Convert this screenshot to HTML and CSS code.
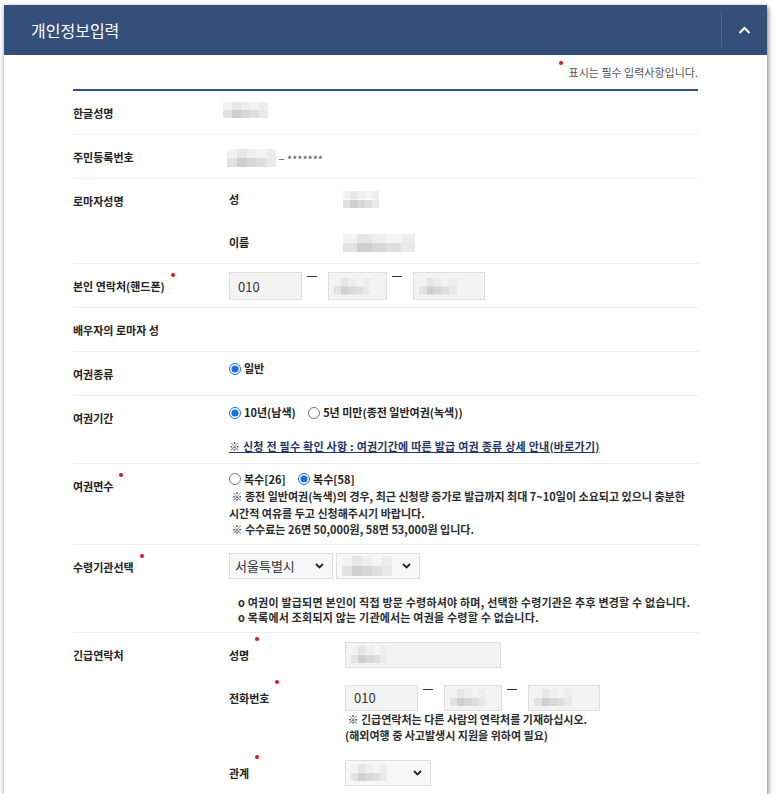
FILE: index.html
```html
<!DOCTYPE html>
<html>

<head>
    <meta charset="utf-8">
    <link rel="stylesheet" href="styles.css">
</head>

<body>
    <section class="panel">
        <div class="panel-head">
            <h2 class="panel-title">개인정보입력</h2>
            <button class="panel-toggle" type="button">
                <svg width="13" height="8" viewBox="0 0 13 8"><polyline points="1.5,7 6.5,2 11.5,7" fill="none" stroke="#fff" stroke-width="2" /></svg>
            </button>
        </div>

        <div class="panel-body">
            <p class="req-note"><span class="mark"></span>표시는 필수 입력사항입니다.</p>

            <div class="form">
                <div class="row">
                    <div class="row-label">한글성명</div>
                    <div class="value-name"><span class="blur blur-name"></span></div>
                </div>

                <div class="row">
                    <div class="row-label">주민등록번호</div>
                    <div class="value-text"><span class="blur blur-id"></span> − *******</div>
                </div>

                <div class="row">
                    <div class="row-label">로마자성명</div>
                    <div class="sub-grid roman">
                        <div class="sub-label">성</div>
                        <div class="sub-value"><span class="blur blur-sur"></span></div>
                        <div class="sub-label">이름</div>
                        <div class="sub-value"><span class="blur blur-given"></span></div>
                    </div>
                </div>

                <div class="row">
                    <div class="row-label"><span class="req">본인 연락처(핸드폰)</span></div>
                    <div class="value-field">
                        <div class="phone">
                            <div class="field w-73">010</div>
                            <span class="dash"></span>
                            <div class="field w-59"><span class="blur blur-in"></span></div>
                            <span class="dash"></span>
                            <div class="field w-72"><span class="blur blur-in2"></span></div>
                        </div>
                    </div>
                </div>

                <div class="row">
                    <div class="row-label">배우자의 로마자 성</div>
                    <div></div>
                </div>

                <div class="row">
                    <div class="row-label">여권종류</div>
                    <div class="value-choice">
                        <label class="radio"><input type="radio" name="kind" checked>일반</label>
                    </div>
                </div>

                <div class="row">
                    <div class="row-label">여권기간</div>
                    <div class="value-choice">
                        <label class="radio"><input type="radio" name="period" checked>10년(남색)</label>
                        <label class="radio"><input type="radio" name="period">5년 미만(종전 일반여권(녹색))</label>
                        <a class="guide-link" href="#">※ 신청 전 필수 확인 사항 : 여권기간에 따른 발급 여권 종류 상세 안내(바로가기)</a>
                    </div>
                </div>

                <div class="row">
                    <div class="row-label"><span class="req">여권면수</span></div>
                    <div class="value-choice pages">
                        <label class="radio"><input type="radio" name="pages">복수[26]</label>
                        <label class="radio"><input type="radio" name="pages" checked>복수[58]</label>
                        <p class="note">&nbsp;※ 종전 일반여권(녹색)의 경우, 최근 신청량 증가로 발급까지 최대 7~10일이 소요되고 있으니 충분한<br>시간적 여유를 두고 신청해주시기 바랍니다.<br>&nbsp;※ 수수료는 26면 50,000원, 58면 53,000원 입니다.</p>
                    </div>
                </div>

                <div class="row">
                    <div class="row-label"><span class="req">수령기관선택</span></div>
                    <div class="value-field">
                        <div class="selects">
                            <div class="select w-104">서울특별시<svg class="caret" width="9" height="6" viewBox="0 0 9 6"><polyline points="1,1 4.5,4.5 8,1" fill="none" stroke="#222" stroke-width="1.8" /></svg></div>
                            <div class="select w-84"><span class="blur blur-sel"></span><svg class="caret" width="9" height="6" viewBox="0 0 9 6"><polyline points="1,1 4.5,4.5 8,1" fill="none" stroke="#222" stroke-width="1.8" /></svg></div>
                        </div>
                        <p class="note office">o 여권이 발급되면 본인이 직접 방문 수령하셔야 하며, 선택한 수령기관은 추후 변경할 수 없습니다.<br>o 목록에서 조회되지 않는 기관에서는 여권을 수령할 수 없습니다.</p>
                    </div>
                </div>

                <div class="row">
                    <div class="row-label">긴급연락처</div>
                    <div class="sub-grid emergency">
                        <div class="sub-label"><span class="req">성명</span></div>
                        <div class="field w-156"><span class="blur blur-in"></span></div>

                        <div class="sub-label"><span class="req">전화번호</span></div>
                        <div>
                            <div class="phone">
                                <div class="field w-73">010</div>
                                <span class="dash"></span>
                                <div class="field w-58"><span class="blur blur-in"></span></div>
                                <span class="dash"></span>
                                <div class="field w-72"><span class="blur blur-in2"></span></div>
                            </div>
                            <p class="note contact">&nbsp;※ 긴급연락처는 다른 사람의 연락처를 기재하십시오.<br>(해외여행 중 사고발생시 지원을 위하여 필요)</p>
                        </div>

                        <div class="sub-label"><span class="req">관계</span></div>
                        <div class="select w-86"><span class="blur blur-in"></span><svg class="caret" width="9" height="6" viewBox="0 0 9 6"><polyline points="1,1 4.5,4.5 8,1" fill="none" stroke="#222" stroke-width="1.8" /></svg></div>
                    </div>
                </div>
            </div>
        </div>
    </section>
</body>

</html>
```

FILE: styles.css
```css
* {
    box-sizing: border-box;
}

body {
    margin: 0;
    background: #fff;
    font-family: "Noto Sans CJK KR", "Noto Sans", sans-serif;
    color: #222;
}

.panel {
    width: 763px;
    margin: 5px 0 0 4px;
    background: #fff;
    box-shadow: 1px 2px 5px rgba(0, 0, 0, .55);
}

.panel-head {
    display: flex;
    align-items: center;
    height: 50px;
    background: #354f7b;
}

.panel-title {
    flex: 1;
    margin: 0;
    padding-left: 27px;
    font-size: 16px;
    font-weight: normal;
    line-height: 50px;
    color: #fff;
}

.panel-toggle {
    display: flex;
    align-items: center;
    justify-content: center;
    width: 46px;
    height: 33px;
    padding: 0;
    border: 0;
    border-left: 1px solid #4b6490;
    background: none;
}

.panel-body {
    padding: 9px 69px 8px;
}

.req-note {
    margin: 0 0 9px;
    text-align: right;
    font-size: 11px;
    line-height: 16px;
    color: #555;
}

.mark {
    display: inline-block;
    width: 4px;
    height: 4px;
    margin-right: 6px;
    border-radius: 50%;
    background: #e6141c;
    vertical-align: top;
    position: relative;
    top: -3px;
}

.form {
    border-top: 2px solid #354f7b;
}

.row {
    display: grid;
    grid-template-columns: 156px 1fr;
    border-bottom: 1px solid #ececec;
    font-size: 11px;
    line-height: 17px;
}

.row:last-child {
    border-bottom: 0;
}

.row-label {
    padding: 14px 0 12px;
    font-weight: bold;
}

.req::after {
    content: "";
    display: inline-block;
    width: 4px;
    height: 4px;
    margin-left: 6px;
    border-radius: 50%;
    background: #e6141c;
    vertical-align: top;
    position: relative;
    top: -5px;
}

/* redacted values */
.blur {
    display: inline-block;
    height: 17px;
    background:
        linear-gradient(90deg, #f2f2f2 0 20%, #e6e6e6 20% 40%, #eeeeee 40% 60%, #f4f4f4 60% 80%, #ededed 80%) top / 100% 50% no-repeat,
        linear-gradient(90deg, #e2e2e2 0 20%, #cfcfcf 20% 40%, #d7d7d7 40% 60%, #dedede 60% 80%, #e9e9e9 80%) bottom / 100% 50% no-repeat;
}

.blur-name {
    width: 45px;
    height: 16px;
    margin-left: -6px;
}

.blur-id {
    width: 49px;
    height: 18px;
    margin-left: -2px;
    vertical-align: -3px;
}

.blur-sur {
    width: 36px;
}

.blur-given {
    width: 72px;
    height: 18px;
}

.blur-in {
    width: 36px;
}

.blur-in2 {
    width: 38px;
}

.blur-sel {
    width: 50px;
    height: 20px;
}

.value-name {
    padding-top: 11px;
}

.value-text {
    padding-top: 14px;
    color: #555;
}

.sub-grid {
    display: grid;
    align-items: start;
}

.roman {
    grid-template-columns: 114px 1fr;
    grid-auto-rows: 17px;
    row-gap: 26px;
    padding: 12px 0;
}

.sub-value {
    display: flex;
    align-items: center;
    height: 17px;
}

.sub-label {
    font-weight: bold;
}

.value-field {
    padding: 8px 0 7px;
}

.phone,
.selects {
    display: flex;
    align-items: flex-start;
}

.selects {
    gap: 3px;
}

.field {
    display: flex;
    align-items: center;
    height: 28px;
    padding: 0 8px 0 5px;
    border: 1px solid #dedede;
    background: #f3f3f3;
    font-size: 13px;
    color: #333;
}

.field:first-child {
    padding-left: 8px;
}

.dash {
    width: 26px;
}

.dash::before {
    content: "";
    display: block;
    width: 10px;
    height: 1px;
    margin: 4px 0 0 5px;
    background: #333;
}

.w-58 { width: 58px; }
.w-59 { width: 59px; }
.w-72 { width: 72px; }
.w-73 { width: 73px; }
.w-84 { width: 84px; }
.w-86 { width: 86px; }
.w-104 { width: 104px; }
.w-156 { width: 156px; }

.select {
    display: flex;
    align-items: center;
    justify-content: space-between;
    height: 26px;
    padding: 0 8px 0 5px;
    border: 1px solid #dedede;
    background: #f7f7f7;
    font-size: 13px;
    color: #333;
}

.value-choice {
    padding: 8px 0;
}

.radio {
    display: inline-flex;
    align-items: center;
    margin-right: 10px;
    font-weight: bold;
}

.radio input {
    width: 12px;
    height: 12px;
    margin: 0 3px 0 0;
    accent-color: #1a6fe0;
}

.guide-link {
    display: block;
    margin-top: 15px;
    font-weight: bold;
    letter-spacing: 0.25px;
    color: #1f3566;
}

.pages {
    padding-bottom: 6px;
    line-height: 15px;
}

.note {
    margin: 0;
    font-weight: bold;
    color: #2b2b2b;
}

.pages .note {
    line-height: 16.5px;
}

.office {
    margin-top: 16px;
    padding-left: 9px;
    line-height: 15px;
    letter-spacing: 0.2px;
}

.emergency {
    grid-template-columns: 116px 1fr;
    row-gap: 17px;
    padding: 9px 0 0;
}

.emergency .sub-label {
    line-height: 26px;
}

.emergency .field {
    height: 26px;
}

.contact {
    line-height: 16px;
}
```
